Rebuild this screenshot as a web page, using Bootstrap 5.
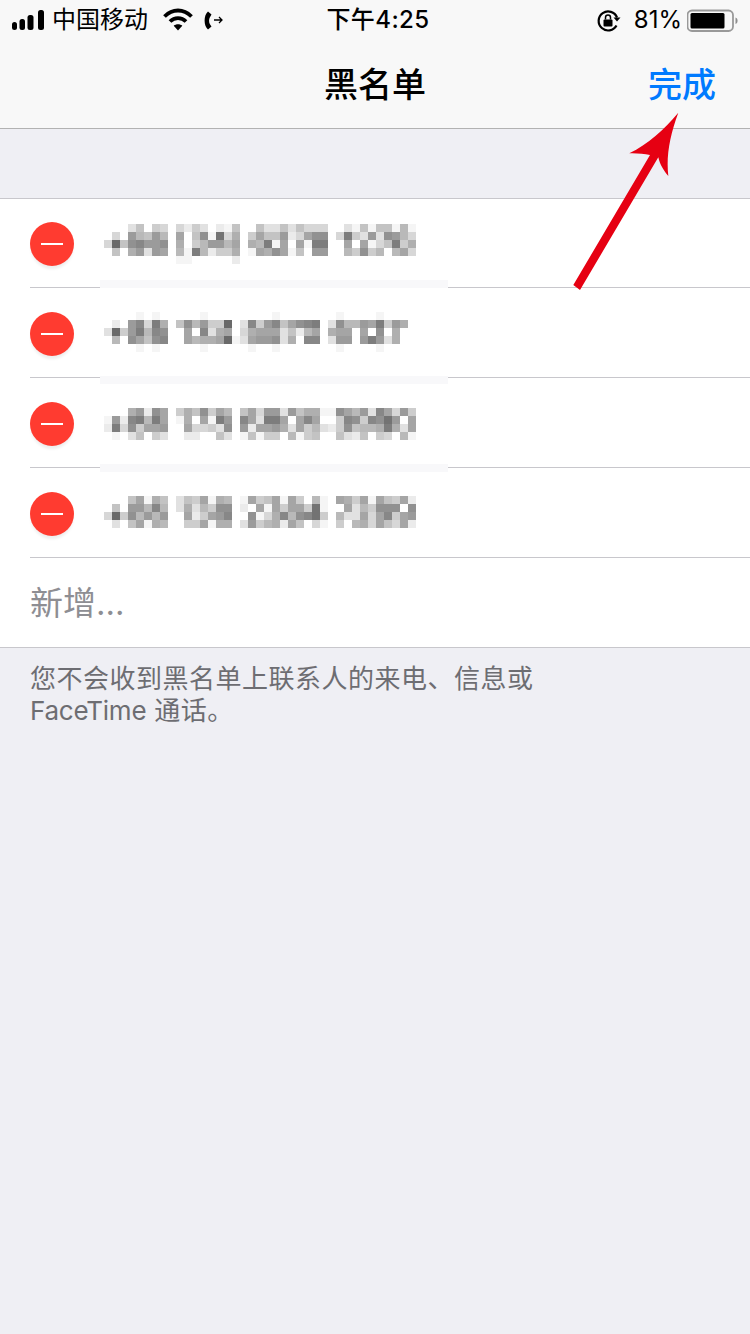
<!DOCTYPE html>
<html lang="zh-CN">
<head>
<meta charset="utf-8">
<title>黑名单</title>
<link rel="stylesheet" href="https://cdn.jsdelivr.net/npm/bootstrap@5.3.0/dist/css/bootstrap.min.css">
<style>
html,body{background:#efeff4;}
body{width:750px;height:1334px;overflow:hidden;position:relative;font-family:"Inter","Noto Sans CJK SC",sans-serif;color:#000;}
.top-area{background:#f8f8f8;height:129px;border-bottom:1px solid #b2b2b2;}
.status-strip{height:40px;font-size:24px;line-height:40px;}
.status-left{width:300px;padding-left:12px;}
.status-right{width:300px;padding-right:11px;}
.status-time{flex:1;text-align:center;font-weight:500;padding-left:6px;letter-spacing:.4px;white-space:nowrap;}
.carrier{margin-left:7px;margin-right:15px;white-space:nowrap;}
.lock-icon{margin-right:13px;}
.pct{margin-right:5px;}
.title-strip{height:88px;padding-right:34px;padding-left:34px;}
.nav-side{width:80px;}
.nav-title{flex:1;text-align:center;font-size:34px;font-weight:500;}
.nav-done{font-size:34px;font-weight:500;color:#007aff;text-decoration:none;white-space:nowrap;}
.gap-band{height:69px;}
.list-box{background:#fff;border-top:1px solid #c8c7cc;border-bottom:1px solid #c8c7cc;}
.entry{position:relative;height:90px;margin-left:30px;padding-top:24px;border-bottom:1px solid #c8c7cc;}
.entry-first{height:89px;padding-top:23px;}
.entry-last{height:89px;margin-left:30px;font-size:33px;line-height:90px;color:#8e8e93;}
.minus{width:44px;height:44px;border-radius:50%;background:#ff3b30;box-shadow:0 4px 3px -1px #eeeeee;flex:none;}
.minus-bar{width:22px;height:2px;background:#fff;}
.mosaic{margin-left:30px;display:block;}
.patch{position:absolute;left:70px;width:348px;height:8px;background:#f8f8fa;}
.patch-a{top:81px;}
.patch-b{top:88px;}
.patch-c{top:86px;}
.foot-note{padding:15px 30px 0;font-size:26px;line-height:32px;letter-spacing:.5px;color:#6d6d72;}
.latin-word{letter-spacing:-.25px;}
.pointer{position:absolute;left:0;top:0;}
</style>
</head>
<body>
<div class="top-area">
  <div class="status-strip d-flex align-items-center">
    <div class="status-left d-flex align-items-center">
      <svg width="33" height="40" viewBox="0 0 33 40" fill="#000"><rect x="0" y="22" width="5" height="8" rx="2.5"/><rect x="7.5" y="19" width="5.5" height="11" rx="2.5"/><rect x="15.5" y="15" width="6" height="15" rx="2.5"/><rect x="26" y="10" width="6" height="20" rx="2.5"/></svg>
      <span class="carrier">中国移动</span>
      <svg width="30" height="40" viewBox="0 0 30 40" fill="none" stroke="#000" stroke-width="3.8"><path d="M1.500 16.500C9.500 8.500 20.500 8.500 28.500 16.500"/><path d="M7 21.500C11.500 17 18.500 17 23 21.500"/><path d="M15 30.500L10.700 25.800C13 23.800 17 23.800 19.300 25.800Z" fill="#000" stroke="none"/></svg>
      <svg class="ms-2" width="24" height="40" viewBox="0 0 24 40" fill="none" stroke="#000"><path d="M7 11.500L10.500 14.500L8.800 17.500C7.800 19.500 7.800 22 8.800 24L10.500 26.500L7 29.500C2.500 26 2.500 15 7 11.500Z" fill="#000" stroke="none"/><path d="M13 20H21M18 17L21 20L18 23" stroke-width="1.300"/></svg>
    </div>
    <div class="status-time">下午4:25</div>
    <div class="status-right d-flex align-items-center justify-content-end">
      <svg class="lock-icon" width="24" height="40" viewBox="0 0 24 40" fill="none" stroke="#000"><path d="M19.500 25.500A9.500 9.500 0 1 1 20 17.500" stroke-width="2.200"/><path d="M23.500 17.500H16.500L20 21.500Z" fill="#000" stroke="none"/><rect x="6.500" y="19.500" width="9" height="7" rx="1" fill="#000" stroke="none"/><path d="M8.500 19.500V17.500A2.500 2.500 0 0 1 13.500 17.500V19.500" stroke-width="1.500"/></svg>
      <span class="pct">81%</span>
      <svg width="52" height="40" viewBox="0 0 52 40"><rect x="0.500" y="10.500" width="45.500" height="20.500" rx="4.500" fill="none" stroke="#999" stroke-width="1.800"/><rect x="3.500" y="13" width="34" height="15.500" rx="1.500" fill="#000"/><path d="M48.500 17.500C51 18 51.500 23 48.500 24Z" fill="#8e8e8e"/></svg>
    </div>
  </div>
  <div class="title-strip d-flex align-items-center">
    <div class="nav-side"></div>
    <div class="nav-title">黑名单</div>
    <div class="nav-side text-end"><a class="nav-done" href="#">完成</a></div>
  </div>
</div>
<div class="gap-band"></div>
<div class="list-box">
  <div class="entry entry-first d-flex align-items-start">
    <div class="minus d-flex align-items-center justify-content-center"><div class="minus-bar"></div></div>
    <svg class="mosaic" width="312" height="48" data-off="2" data-lines="00036054 0 42530216 0 0633636444 00 316166171|040a76a7 0 906b1e48 0 5966a249bb 0 4d53a3ba74|4f6bcaab 0 8057aa79 0 87d19091dd 00 909146d58|0608a3a9 0 71d72558 0 198b9160aa 00 75b570794|000000000110000020000000000000000000000"></svg>
    <div class="patch patch-a"></div>
  </div>
  <div class="entry d-flex align-items-start">
    <div class="minus d-flex align-items-center justify-content-center"><div class="minus-bar"></div></div>
    <svg class="mosaic" width="312" height="48" data-off="0" data-lines="000010100000100000000100000001000010000|020ac4d8 0 6b7a55f0 3 c5ac69bcd 0 3b77a9d5a80|3f5ad7cb 0 090c3890 4 899936279 0 89909 0b0800|070b96bc 0 097889f1 3 9aab380cc 0 3aa0ada3800|000010100000100000100100000001000010000"></svg>
    <div class="patch patch-b"></div>
  </div>
  <div class="entry d-flex align-items-start">
    <div class="minus d-flex align-items-center justify-content-center"><div class="minus-bar"></div></div>
    <svg class="mosaic" width="312" height="48" data-off="6" data-lines="0008a2b9 0 586b5970 694aa3a6881 1b97a3c94a5|1a2cd7d9 0 18091da0 c93dd909c90 05cb5cbea09|2d4b599a 0 094453b0 a299a839573 25b6778d839|01036053 0 02200630 16155071560 06326054071"></svg>
    <div class="patch patch-c"></div>
  </div>
  <div class="entry d-flex align-items-start">
    <div class="minus d-flex align-items-center justify-content-center"><div class="minus-bar"></div></div>
    <svg class="mosaic" width="312" height="48" data-off="4" data-lines="00069186 0 36591870 19569195071 09859196592|060aa7c7 0 38375bb0 209195995e1 009375bbb0b|4f5b7a7a 0 09259ac0 0b148c7bce5 0733949c59a|03069187 0 05591880 3a578296041 05078496492"></svg>
  </div>
  <div class="entry-last">新增...</div>
</div>
<div class="foot-note">您不会收到黑名单上联系人的来电、信息或<br><span class="latin-word">FaceTime</span> 通话。</div>
<svg class="pointer" width="750" height="300" viewBox="0 0 750 300"><path d="M573.300 285L580 290L658.300 157.300C660 165 664 171 668.300 176C666 156 670 135 678.300 112.700C664 130 648 144 629.300 153.300C637 153 644 154 650 155Z" fill="#e60012"/></svg>
<script src="https://cdn.jsdelivr.net/npm/bootstrap@5.3.0/dist/js/bootstrap.bundle.min.js"></script>
<script>
document.querySelectorAll('.mosaic').forEach(function(s){
  var off=+s.dataset.off;
  s.dataset.lines.replace(/ /g,'').split('|').forEach(function(line,y){
    line.split('').forEach(function(c,x){
      var v=parseInt(c,16);
      if(!v)return;
      var g=255-10*v;
      var r=document.createElementNS('http://www.w3.org/2000/svg','rect');
      r.setAttribute('x',x*8);r.setAttribute('y',off+y*8);
      r.setAttribute('width',8);r.setAttribute('height',8);
      r.setAttribute('fill','rgb('+g+','+g+','+g+')');
      s.appendChild(r);
    });
  });
});
</script>
</body>
</html>
